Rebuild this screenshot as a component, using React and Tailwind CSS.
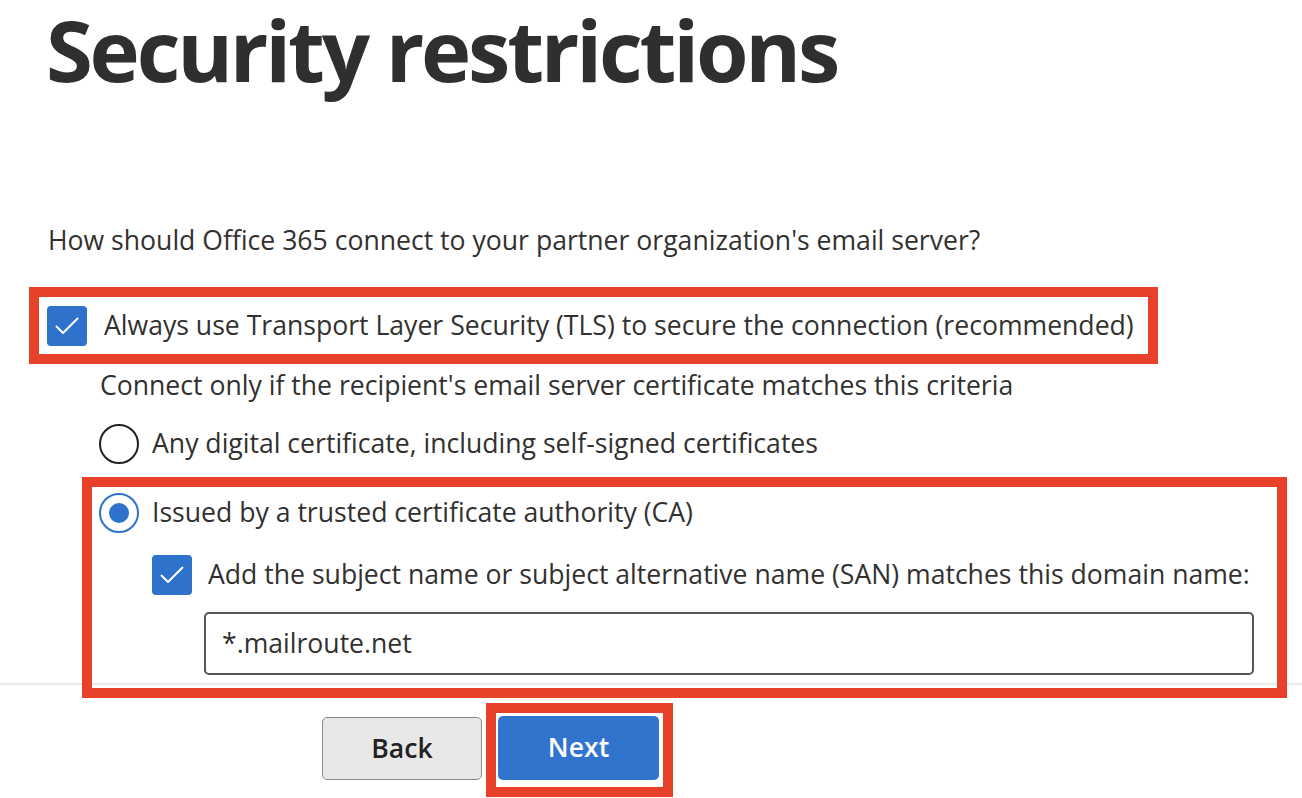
export default function App() {
  const font = { fontFamily: '"Open Sans", "Noto Sans", sans-serif' };
  const Check = () => (
    <div className="w-[40px] h-[40px] shrink-0 rounded-[4px] bg-[#2f72cc] flex items-center justify-center">
      <svg width="40" height="40" viewBox="0 0 40 40">
        <path d="M9.5 20.5 L16 27 L30.5 12.5" fill="none" stroke="white" strokeWidth="2" strokeLinecap="round" strokeLinejoin="round" />
      </svg>
    </div>
  );
  return (
    <div className="w-[1302px] h-[798px] overflow-hidden bg-white text-[#323130]" style={font}>
      <h1 className="pl-[46px] text-[85px] font-bold leading-[98px] text-[#2f2f2f] tracking-[-3.2px] whitespace-nowrap">
        Security restrictions
      </h1>
      <p className="pl-[48px] mt-[124px] text-[26.6px] leading-[36px] whitespace-nowrap">
        How should Office 365 connect to your partner organization's email server?
      </p>
      <div className="ml-[29px] mt-[29px] w-[1129px] h-[77px] border-[10px] border-[#e8412a] flex items-center pl-[8px] gap-[17px] text-[26.6px] whitespace-nowrap">
        <Check />
        <span>Always use Transport Layer Security (TLS) to secure the connection (recommended)</span>
      </div>
      <p className="pl-[100px] mt-[3px] text-[26.6px] leading-[36px] whitespace-nowrap">
        Connect only if the recipient's email server certificate matches this criteria
      </p>
      <div className="pl-[99px] mt-[21px] flex items-center gap-[13px] text-[26.6px] h-[40px] whitespace-nowrap">
        <div className="w-[40px] h-[40px] rounded-full border-[2px] border-[#222]" />
        <span>Any digital certificate, including self-signed certificates</span>
      </div>
      <div className="relative z-10 ml-[82px] mt-[13px] w-[1205px] h-[221px] border-[10px] border-[#e8412a] pl-[7px] pt-[6px] text-[26.6px] whitespace-nowrap">
        <div className="flex items-center gap-[13px] h-[40px]">
          <div className="w-[40px] h-[40px] rounded-full border-[2px] border-[#2f72cc] flex items-center justify-center">
            <div className="w-[20px] h-[20px] rounded-full bg-[#2f72cc]" />
          </div>
          <span>Issued by a trusted certificate authority (CA)</span>
        </div>
        <div className="ml-[53px] mt-[22px] flex items-center gap-[16px] h-[40px]">
          <Check />
          <span>Add the subject name or subject alternative name (SAN) matches this domain name:</span>
        </div>
        <div className="ml-[105px] mt-[17px] w-[1050px] h-[63px] border-[2px] border-[#555] rounded-[5px] flex items-center pl-[16px]">
          *.mailroute.net
        </div>
      </div>
      <div className="mt-[-15px] h-[2px] bg-[#ebebeb]" />
      <div className="mt-[18px] flex items-start">
        <button className="ml-[322px] mt-[14px] w-[160px] h-[63px] rounded-[5px] border border-[#8a8a8a] bg-[#e8e8e8] text-[26.6px] font-semibold text-[#222]">
          Back
        </button>
        <div className="ml-[4px] w-[187px] h-[94px] border-[10px] border-[#e8412a] pl-[2px] pt-[3px]">
          <button className="w-[161px] h-[64px] rounded-[5px] bg-[#3174cd] text-white text-[26.6px] font-semibold">
            Next
          </button>
        </div>
      </div>
    </div>
  );
}
